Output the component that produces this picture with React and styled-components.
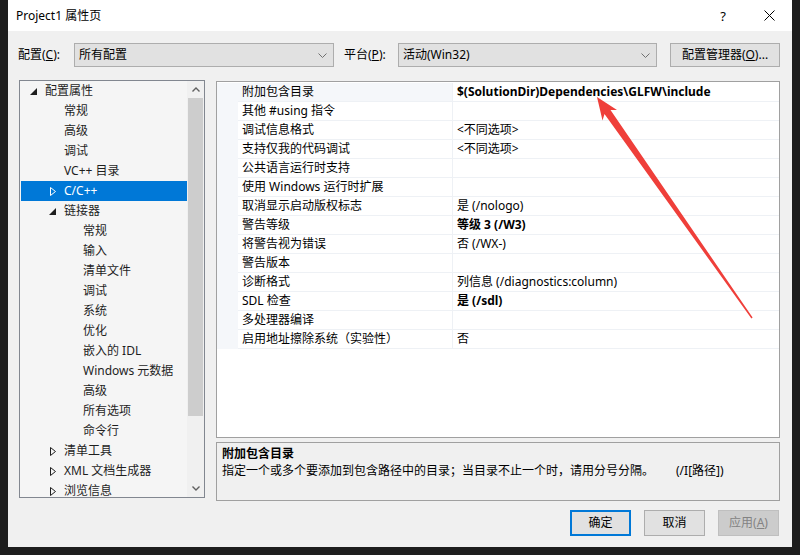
import styled, { createGlobalStyle } from "styled-components";

const GlobalStyle = createGlobalStyle`
  html, body {
    margin: 0;
    padding: 0;
    background: #1e1e1e;
  }
  body {
    font-family: "Noto Sans", "Noto Sans CJK SC", sans-serif;
    font-size: 12px;
    color: #000;
  }
  * { box-sizing: border-box; }
`;

const Screen = styled.div`
  position: relative;
  width: 800px;
  height: 555px;
  padding: 0 8px 8px;
  background: #1e1e1e;
  overflow: hidden;
`;

const Dialog = styled.div`
  height: 547px;
  background: #f0f0f0;
  display: flex;
  flex-direction: column;
`;

const TitleBar = styled.div`
  height: 31px;
  flex: none;
  background: #fff;
  display: flex;
  align-items: center;
  padding-left: 8px;
`;

const TitleText = styled.div`
  flex: 1;
  line-height: 16px;
`;

const TitleButton = styled.div`
  width: 46px;
  height: 31px;
  display: flex;
  align-items: center;
  justify-content: center;
  font-size: 13px;
`;

const Body = styled.div`
  flex: 1;
  display: flex;
  flex-direction: column;
  padding: 12px 12px 0 11px;
`;

const ConfigRow = styled.div`
  height: 24px;
  display: flex;
  align-items: center;
`;

const FieldLabel = styled.span`
  width: ${({ $w }) => $w}px;
  margin-left: ${({ $ml }) => $ml || 0}px;
  line-height: 16px;
  white-space: nowrap;
`;

const Combo = styled.div`
  width: ${({ $w }) => $w}px;
  height: 24px;
  background: #e1e1e1;
  border: 1px solid #adadad;
  display: flex;
  align-items: center;
  justify-content: space-between;
  padding: 0 6px 0 4px;
  line-height: 16px;
`;

const Button = styled.div`
  width: ${({ $w }) => $w || 61}px;
  height: ${({ $h }) => $h || 26}px;
  background: ${({ $disabled }) => ($disabled ? "#cccccc" : "#e1e1e1")};
  color: ${({ $disabled }) => ($disabled ? "#838383" : "#000")};
  border: ${({ $default, $disabled }) =>
    $default ? "2px solid #0078d7" : $disabled ? "1px solid #bfbfbf" : "1px solid #adadad"};
  display: flex;
  align-items: center;
  justify-content: center;
  line-height: 16px;
  white-space: nowrap;
  margin-left: ${({ $ml }) => $ml || 0}px;
`;

const Main = styled.div`
  height: 421px;
  margin-top: 13px;
  display: flex;
  gap: 11px;
`;

const TreePanel = styled.div`
  width: 186px;
  height: 418px;
  border: 1px solid #828790;
  background: #f5f5f5;
  display: flex;
`;

const TreeList = styled.div`
  flex: 1;
  overflow: hidden;
  padding-left: 1px;
`;

const TreeRow = styled.div`
  height: 20px;
  display: flex;
  align-items: center;
  padding-left: ${({ $level }) => 10 + $level * 19}px;
  background: ${({ $selected }) => ($selected ? "#0078d7" : "transparent")};
  color: ${({ $selected }) => ($selected ? "#fff" : "#1e1e1e")};
  white-space: nowrap;
`;

const Expander = styled.span`
  width: 14px;
  flex: none;
  display: flex;
  align-items: center;
`;

const TreeLabel = styled.span`
  line-height: 16px;
`;

const ScrollBar = styled.div`
  width: 17px;
  background: #f0f0f0;
  display: flex;
  flex-direction: column;
`;

const ScrollArrow = styled.div`
  height: 17px;
  display: flex;
  align-items: center;
  justify-content: center;
`;

const ScrollThumb = styled.div`
  height: 318px;
  margin: 0 1px;
  background: #cdcdcd;
`;

const ScrollSpace = styled.div`
  flex: 1;
`;

const RightColumn = styled.div`
  flex: 1;
  display: flex;
  flex-direction: column;
  gap: 4px;
  padding-top: 1px;
`;

const Grid = styled.div`
  height: 357px;
  border: 1px solid #a0a0a0;
  background: #fff;
  padding-top: 1px;
  display: grid;
  grid-template-columns: 21px 215px 1fr;
  grid-auto-rows: 19px;
  align-content: start;
`;

const Gutter = styled.div`
  background: #f5f7fa;
`;

const Cell = styled.div`
  border-bottom: 1px solid #eef1f5;
  border-right: ${({ $name }) => ($name ? "1px solid #eef1f5" : "none")};
  background: ${({ $active }) => ($active ? "#f5f7fa" : "#fff")};
  padding-left: 4px;
  display: flex;
  align-items: center;
  font-weight: ${({ $bold }) => ($bold ? 700 : 400)};
  line-height: 16px;
  white-space: nowrap;
  overflow: hidden;
`;

const DescBox = styled.div`
  height: 59px;
  border: 1px solid #a0a0a0;
  background: #f0f0f0;
  padding: 2px 5px 0;
  line-height: 17px;
`;

const DescTitle = styled.div`
  font-weight: 700;
`;

const DescLine = styled.div`
  white-space: nowrap;
`;

const DescMain = styled.span`
  display: inline-block;
  width: 454px;
`;

const Footer = styled.div`
  margin-top: 9px;
  height: 26px;
  display: flex;
  justify-content: flex-end;
  padding-right: 1px;
`;

const ArrowLayer = styled.svg`
  position: absolute;
  left: 0;
  top: 0;
  pointer-events: none;
`;

const Chevron = ({ up }) => (
  <svg width="8" height="5" viewBox="0 0 8 5">
    <polyline
      points={up ? "0.5,4.5 4,1 7.5,4.5" : "0.5,0.5 4,4 7.5,0.5"}
      fill="none"
      stroke="#606060"
      strokeWidth="1.4"
    />
  </svg>
);

const ComboChevron = () => (
  <svg width="9" height="5" viewBox="0 0 9 5">
    <polyline points="0.5,0.5 4.5,4.5 8.5,0.5" fill="none" stroke="#707070" strokeWidth="1" />
  </svg>
);

const ExpandIcon = ({ type, selected }) =>
  type === "open" ? (
    <svg width="7" height="7" viewBox="0 0 7 7" style={{ marginLeft: -1 }}>
      <polygon points="7,0 7,7 0,7" fill={selected ? "#fff" : "#1e1e1e"} />
    </svg>
  ) : (
    <svg width="6" height="9" viewBox="0 0 6 9">
      <polygon
        points="0.5,0.5 5.5,4.5 0.5,8.5"
        fill="none"
        stroke={selected ? "#fff" : "#1e1e1e"}
        strokeWidth="1"
      />
    </svg>
  );

const treeItems = [
  { label: "配置属性", level: 0, expander: "open" },
  { label: "常规", level: 1 },
  { label: "高级", level: 1 },
  { label: "调试", level: 1 },
  { label: "VC++ 目录", level: 1 },
  { label: "C/C++", level: 1, expander: "closed", selected: true },
  { label: "链接器", level: 1, expander: "open" },
  { label: "常规", level: 2 },
  { label: "输入", level: 2 },
  { label: "清单文件", level: 2 },
  { label: "调试", level: 2 },
  { label: "系统", level: 2 },
  { label: "优化", level: 2 },
  { label: "嵌入的 IDL", level: 2 },
  { label: "Windows 元数据", level: 2 },
  { label: "高级", level: 2 },
  { label: "所有选项", level: 2 },
  { label: "命令行", level: 2 },
  { label: "清单工具", level: 1, expander: "closed" },
  { label: "XML 文档生成器", level: 1, expander: "closed" },
  { label: "浏览信息", level: 1, expander: "closed" },
];

const properties = [
  { name: "附加包含目录", value: "$(SolutionDir)Dependencies\\GLFW\\include", bold: true },
  { name: "其他 #using 指令", value: "" },
  { name: "调试信息格式", value: "<不同选项>" },
  { name: "支持仅我的代码调试", value: "<不同选项>" },
  { name: "公共语言运行时支持", value: "" },
  { name: "使用 Windows 运行时扩展", value: "" },
  { name: "取消显示启动版权标志", value: "是 (/nologo)" },
  { name: "警告等级", value: "等级 3 (/W3)", bold: true },
  { name: "将警告视为错误", value: "否 (/WX-)" },
  { name: "警告版本", value: "" },
  { name: "诊断格式", value: "列信息 (/diagnostics:column)" },
  { name: "SDL 检查", value: "是 (/sdl)", bold: true },
  { name: "多处理器编译", value: "" },
  { name: "启用地址擦除系统（实验性）", value: "否" },
];

export default function App() {
  return (
    <>
      <GlobalStyle />
      <Screen>
        <Dialog>
          <TitleBar>
            <TitleText>Project1 属性页</TitleText>
            <TitleButton>?</TitleButton>
            <TitleButton>
              <svg width="11" height="11" viewBox="0 0 11 11">
                <path d="M0.5 0.5 L10.5 10.5 M10.5 0.5 L0.5 10.5" stroke="#000" strokeWidth="1" />
              </svg>
            </TitleButton>
          </TitleBar>

          <Body>
            <ConfigRow>
              <FieldLabel $w={56} $ml={-1}>
                配置(<u>C</u>):
              </FieldLabel>
              <Combo $w={260}>
                <span>所有配置</span>
                <ComboChevron />
              </Combo>
              <FieldLabel $w={54} $ml={10}>
                平台(<u>P</u>):
              </FieldLabel>
              <Combo $w={259}>
                <span>活动(Win32)</span>
                <ComboChevron />
              </Combo>
              <Button $w={110} $h={24} $ml={13}>
                配置管理器(<u>O</u>)...
              </Button>
            </ConfigRow>

            <Main>
              <TreePanel>
                <TreeList>
                  {treeItems.map((item, i) => (
                    <TreeRow key={i} $level={item.level} $selected={item.selected}>
                      <Expander>
                        {item.expander && (
                          <ExpandIcon type={item.expander} selected={item.selected} />
                        )}
                      </Expander>
                      <TreeLabel>{item.label}</TreeLabel>
                    </TreeRow>
                  ))}
                </TreeList>
                <ScrollBar>
                  <ScrollArrow>
                    <Chevron up />
                  </ScrollArrow>
                  <ScrollThumb />
                  <ScrollSpace />
                  <ScrollArrow>
                    <Chevron />
                  </ScrollArrow>
                </ScrollBar>
              </TreePanel>

              <RightColumn>
                <Grid>
                  {properties.map((p, i) => [
                    <Gutter key={`g${i}`} />,
                    <Cell key={`n${i}`} $name $active={i === 0}>
                      {p.name}
                    </Cell>,
                    <Cell key={`v${i}`} $bold={p.bold}>
                      {p.value}
                    </Cell>,
                  ])}
                </Grid>
                <DescBox>
                  <DescTitle>附加包含目录</DescTitle>
                  <DescLine>
                    <DescMain>
                      指定一个或多个要添加到包含路径中的目录；当目录不止一个时，请用分号分隔。
                    </DescMain>
                    (/I[路径])
                  </DescLine>
                </DescBox>
              </RightColumn>
            </Main>

            <Footer>
              <Button $default>确定</Button>
              <Button $ml={13}>取消</Button>
              <Button $ml={13} $disabled>
                应用(<u>A</u>)
              </Button>
            </Footer>
          </Body>
        </Dialog>

        <ArrowLayer width="800" height="555" viewBox="0 0 800 555">
          <polygon
            points="597,97 617,110 610.5,110 752.6,317.6 751.4,318.4 604.5,114 602.5,120.5"
            fill="#ef3f3a"
          />
        </ArrowLayer>
      </Screen>
    </>
  );
}
